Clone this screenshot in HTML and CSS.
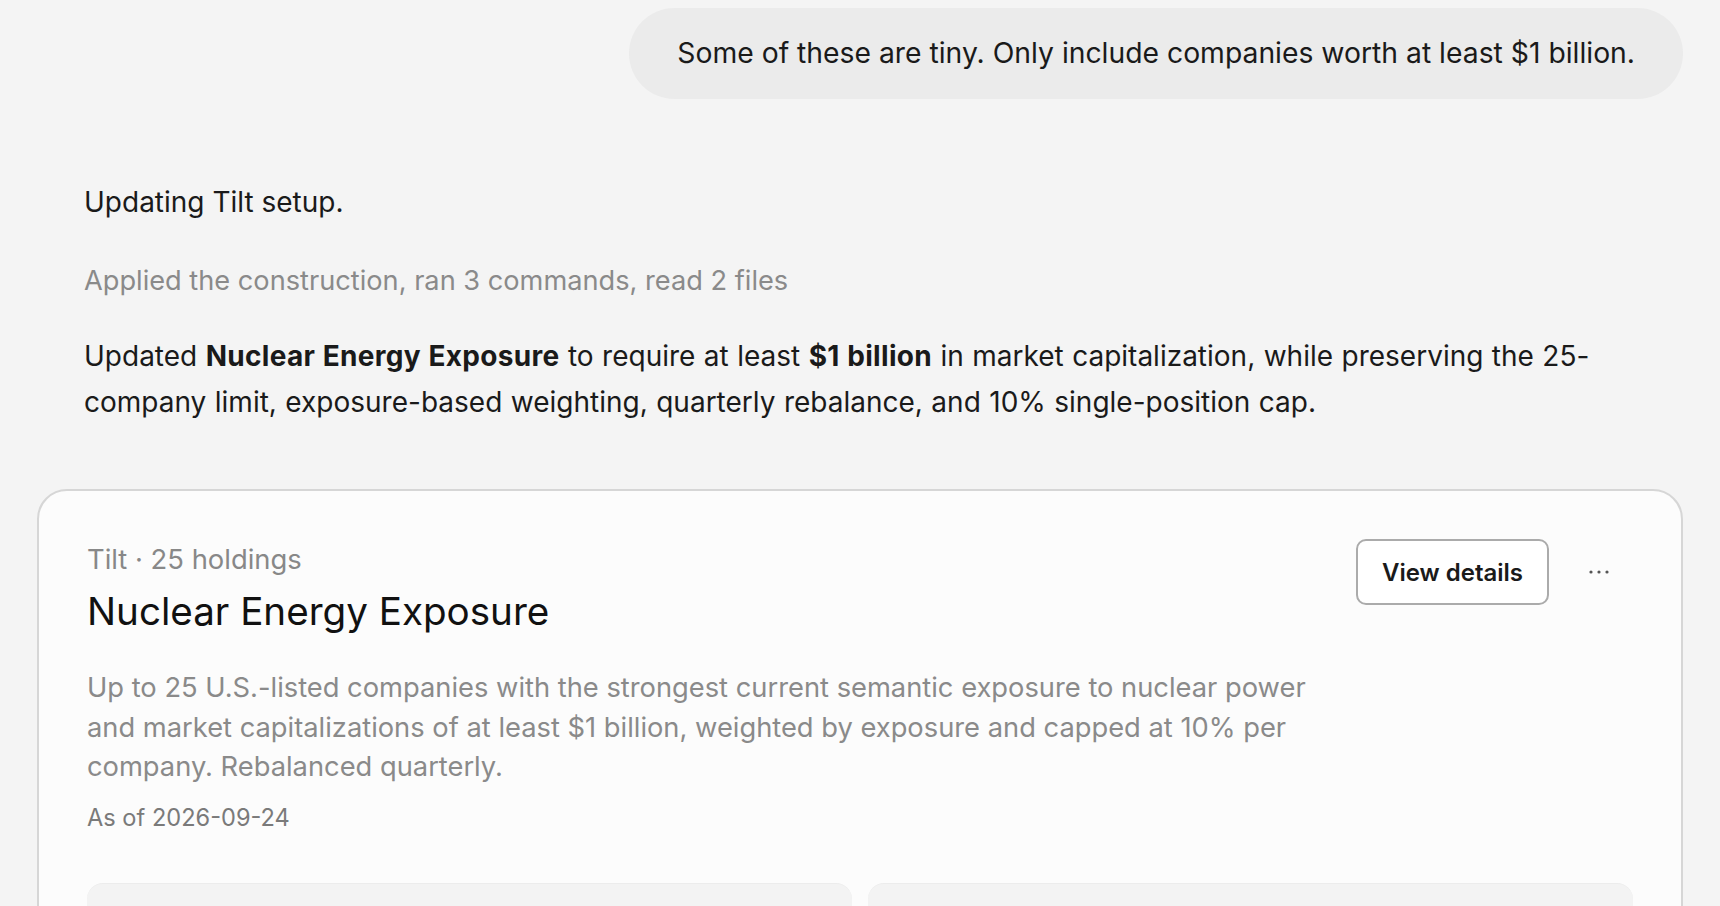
FILE: index.html
```html
<!DOCTYPE html>
<html lang="en">
<head>
    <meta charset="UTF-8">
    <meta name="viewport" content="width=device-width, initial-scale=1.0">
    <title>Tilt</title>
    <link rel="stylesheet" href="styles.css">
</head>
<body>

<main class="thread">
    <div class="user-row">
        <div class="bubble">Some of these are tiny. Only include companies worth at least $1 billion.</div>
    </div>

    <div class="reply">
        <p class="status">Updating Tilt setup.</p>
        <p class="activity">Applied the construction, ran 3 commands, read 2 files</p>
        <p class="answer">Updated <strong>Nuclear Energy Exposure</strong> to require at least <strong>$1 billion</strong> in market capitalization, while preserving the 25-company limit, exposure-based weighting, quarterly rebalance, and 10% single-position cap.</p>
    </div>

    <section class="tilt-card">
        <div class="card-head">
            <div class="card-info">
                <div class="meta">Tilt · 25 holdings</div>
                <h2 class="title">Nuclear Energy Exposure</h2>
            </div>
            <div class="actions">
                <button class="details-btn">View details</button>
                <button class="more-btn" aria-label="More">
                    <svg width="20" height="4" viewBox="0 0 20 4">
                        <circle cx="2" cy="2" r="1.6" fill="#555"/>
                        <circle cx="10" cy="2" r="1.6" fill="#555"/>
                        <circle cx="18" cy="2" r="1.6" fill="#555"/>
                    </svg>
                </button>
            </div>
        </div>
        <p class="desc">Up to 25 U.S.-listed companies with the strongest current semantic exposure to nuclear power and market capitalizations of at least $1 billion, weighted by exposure and capped at 10% per company. Rebalanced quarterly.</p>
        <div class="as-of">As of 2026-09-24</div>

        <div class="panels">
            <div class="panel"></div>
            <div class="panel"></div>
        </div>
    </section>
</main>

</body>
</html>
```

FILE: styles.css
```css
body {
    margin: 0;
    background-color: #f4f4f4;
    font-family: Inter, "Noto Sans", sans-serif;
    color: #1a1a1a;
    overflow: hidden;
}

.thread {
    padding: 8px 37px 0;
}

.user-row {
    display: flex;
    justify-content: flex-end;
}

.bubble {
    background-color: #ebebeb;
    border-radius: 46px;
    padding: 27px 48px;
    font-size: 28.3px;
    line-height: 37px;
    color: #1a1a1a;
}

.reply {
    padding: 0 47px;
    font-size: 28px;
    line-height: 46px;
}

.reply p {
    margin: 0;
}

.status {
    margin-top: 80px !important;
}

.activity {
    margin-top: 33px !important;
    font-size: 27.2px;
    color: #8a8a8a;
}

.answer {
    margin-top: 29px !important;
    word-spacing: 0.6px;
}

.answer strong {
    font-weight: 700;
    letter-spacing: 0.3px;
}

.tilt-card {
    margin-top: 64px;
    background-color: #fcfcfc;
    border: 2px solid #d6d6d6;
    border-radius: 30px;
    padding: 50px 48px 0;
    height: 600px;
}

.card-head {
    display: flex;
    justify-content: space-between;
    align-items: flex-start;
}

.meta {
    font-size: 27.4px;
    line-height: 36px;
    color: #888;
}

.title {
    margin: 11px 0 0;
    font-size: 38.6px;
    line-height: 46px;
    font-weight: 400;
    color: #111;
}

.actions {
    display: flex;
    align-items: center;
    gap: 16px;
    margin-top: -2px;
}

.details-btn {
    height: 66px;
    padding: 0 24px;
    background-color: #fff;
    border: 2px solid #ababab;
    border-radius: 10px;
    font-family: Inter, sans-serif;
    font-size: 24px;
    font-weight: 600;
    color: #1a1a1a;
    cursor: pointer;
}

.more-btn {
    width: 68px;
    height: 66px;
    background: none;
    border: none;
    padding: 0;
    display: flex;
    align-items: center;
    justify-content: center;
    cursor: pointer;
}

.desc {
    margin: 34px 0 0;
    max-width: 1250px;
    font-size: 27.3px;
    line-height: 39.5px;
    color: #8a8a8a;
}

.as-of {
    margin-top: 15px;
    font-size: 23.6px;
    line-height: 32px;
    color: #7a7a7a;
}

.panels {
    margin-top: 49px;
    display: grid;
    grid-template-columns: 1fr 1fr;
    gap: 16px;
}

.panel {
    height: 300px;
    background-color: #f3f3f3;
    border-top: 1px solid #ececec;
    border-radius: 16px;
}
```
